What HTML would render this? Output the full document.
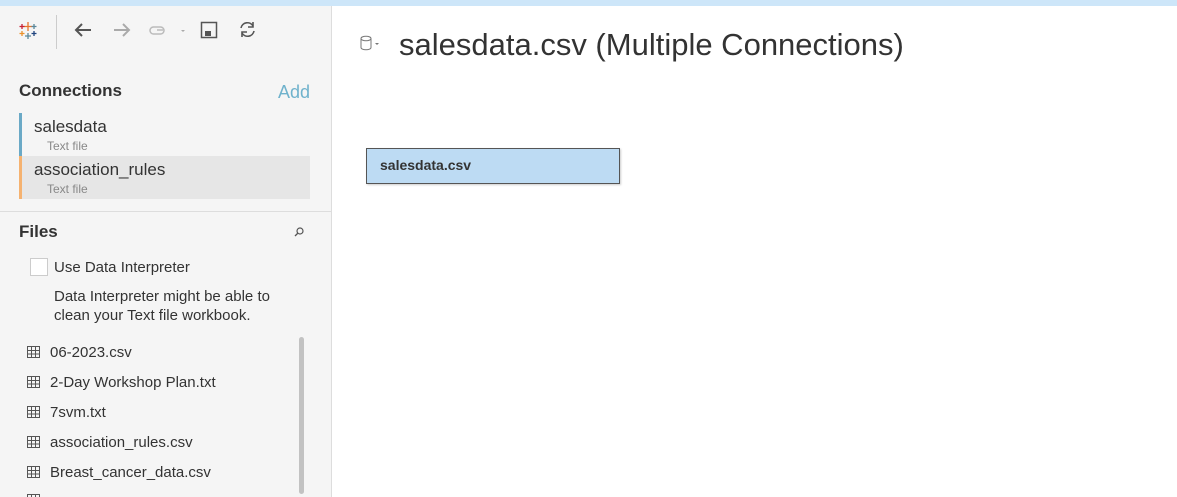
<!DOCTYPE html>
<html style="overflow:hidden;height:497px"><head><style>
*{margin:0;padding:0;box-sizing:border-box}
body{width:1177px;height:497px;overflow:hidden;background:#fff;font-family:"Liberation Sans",sans-serif;position:relative;color:#333}
.top{position:absolute;left:0;top:0;width:1177px;height:6px;background:#cde6f9}
.side{position:absolute;left:0;top:6px;width:332px;height:491px;background:#f5f5f5;border-right:1px solid #ddd}
.a{position:absolute;white-space:nowrap}
.ico{position:absolute}
.f{font-size:15px;color:#333}
</style></head><body>
<div class="top"></div>
<div class="side"></div>
<svg class="ico" style="left:18px;top:20px" width="20" height="20" viewBox="0 0 20 20" stroke-width="1.3" fill="none">
<path d="M10 2v9M5.5 6.5h9" stroke="#e8762c"/><path d="M10 13v6M7 16h6" stroke="#5b879b"/><path d="M4 4v5M1.5 6.5h5" stroke="#c72035"/><path d="M16 4v5M13.5 6.5h5" stroke="#59879b"/><path d="M4 11v5M1.5 13.5h5" stroke="#eb912b"/><path d="M16 11v5M13.5 13.5h5" stroke="#1f447e"/>
</svg>
<div class="a" style="left:56px;top:15px;width:1px;height:34px;background:#ccc"></div>
<svg class="ico" style="left:73px;top:21px" width="20" height="18" viewBox="0 0 20 18"><path d="M18 9H3M9 3L3 9l6 6" fill="none" stroke="#555" stroke-width="2"/></svg>
<svg class="ico" style="left:112px;top:21px" width="20" height="18" viewBox="0 0 20 18"><path d="M2 9h15M11 3l6 6-6 6" fill="none" stroke="#aaa" stroke-width="2"/></svg>
<svg class="ico" style="left:148px;top:22px" width="40" height="16" viewBox="0 0 40 16"><rect x="2" y="5" width="14" height="7" rx="3.5" fill="none" stroke="#bbb" stroke-width="1.5"/><path d="M9 8h6" stroke="#bbb" stroke-width="1.5"/><path d="M33 8l2 2 2-2z" fill="#aaa"/></svg>
<svg class="ico" style="left:200px;top:21px" width="18" height="18" viewBox="0 0 18 18"><rect x="1.5" y="1.5" width="15" height="15" fill="none" stroke="#555" stroke-width="1.5"/><rect x="5" y="10" width="6" height="5" fill="#555"/></svg>
<svg class="ico" style="left:238px;top:20px" width="19" height="19" viewBox="0 0 19 19"><path d="M3 8a6.5 6.5 0 0 1 12-2M16 11a6.5 6.5 0 0 1-12 2" fill="none" stroke="#555" stroke-width="1.6"/><path d="M15 2v5h-5M4 17v-5h5" fill="none" stroke="#555" stroke-width="1.6"/></svg>
<div class="a" style="left:19px;top:81px;font-size:17px;font-weight:bold;color:#333">Connections</div>
<div class="a" style="left:278px;top:82px;font-size:18px;color:#6fb2cc">Add</div>
<div class="a" style="left:19px;top:113px;width:3px;height:43px;background:#6aa9c6"></div>
<div class="a" style="left:34px;top:117px;font-size:17px;color:#333">salesdata</div>
<div class="a" style="left:47px;top:139px;font-size:12px;color:#888">Text file</div>
<div class="a" style="left:19px;top:156px;width:291px;height:43px;background:#e6e6e6"></div>
<div class="a" style="left:19px;top:156px;width:3px;height:43px;background:#f5b270"></div>
<div class="a" style="left:34px;top:160px;font-size:17px;color:#333">association_rules</div>
<div class="a" style="left:47px;top:182px;font-size:12px;color:#888">Text file</div>
<div class="a" style="left:0;top:211px;width:332px;height:1px;background:#ddd"></div>
<div class="a" style="left:19px;top:222px;font-size:17px;font-weight:bold;color:#333">Files</div>
<svg class="ico" style="left:294px;top:227px" width="10" height="10" viewBox="0 0 10 10"><circle cx="6" cy="4" r="3" fill="none" stroke="#555" stroke-width="1.2"/><path d="M4 6L1 9" stroke="#555" stroke-width="1.3"/></svg>
<div class="a" style="left:30px;top:258px;width:18px;height:18px;border:1px solid #ccc;background:#fff"></div>
<div class="a f" style="left:54px;top:259px">Use Data Interpreter</div>
<div class="a f" style="left:54px;top:287px;line-height:19px">Data Interpreter might be able to<br>clean your Text file workbook.</div>
<svg width="0" height="0" style="position:absolute"><defs><g id="g"><rect x="0.5" y="0.5" width="12" height="11" fill="none" stroke="#555"/><path d="M0 4.5h13M0 8h13M4.5 0v12M8.5 0v12" stroke="#555"/></g></defs></svg>
<svg class="ico" style="left:27px;top:346px" width="13" height="12"><use href="#g"/></svg><div class="a f" style="left:50px;top:344px">06-2023.csv</div>
<svg class="ico" style="left:27px;top:376px" width="13" height="12"><use href="#g"/></svg><div class="a f" style="left:50px;top:374px">2-Day Workshop Plan.txt</div>
<svg class="ico" style="left:27px;top:406px" width="13" height="12"><use href="#g"/></svg><div class="a f" style="left:50px;top:404px">7svm.txt</div>
<svg class="ico" style="left:27px;top:436px" width="13" height="12"><use href="#g"/></svg><div class="a f" style="left:50px;top:434px">association_rules.csv</div>
<svg class="ico" style="left:27px;top:466px" width="13" height="12"><use href="#g"/></svg><div class="a f" style="left:50px;top:464px">Breast_cancer_data.csv</div>
<svg class="ico" style="left:27px;top:494px" width="13" height="3"><use href="#g"/></svg>
<div class="a" style="left:299px;top:337px;width:5px;height:157px;border-radius:3px;background:#c2c2c2"></div>
<svg class="ico" style="left:359px;top:35px" width="26" height="18" viewBox="0 0 26 18"><ellipse cx="7" cy="3.5" rx="5" ry="2.3" fill="none" stroke="#777"/><path d="M2 3.5v9c0 3 10 3 10 0v-9" fill="none" stroke="#777"/><path d="M16 8l2 2 2-2z" fill="#777"/></svg>
<div class="a" style="left:399px;top:27px;font-size:31px;color:#333">salesdata.csv (Multiple Connections)</div>
<div class="a" style="left:366px;top:148px;width:254px;height:36px;background:#bddbf3;border:1px solid #555;box-shadow:1px 1px 2px rgba(0,0,0,.2)"></div>
<div class="a" style="left:380px;top:157px;font-size:14px;font-weight:bold;color:#333">salesdata.csv</div>
</body></html>
